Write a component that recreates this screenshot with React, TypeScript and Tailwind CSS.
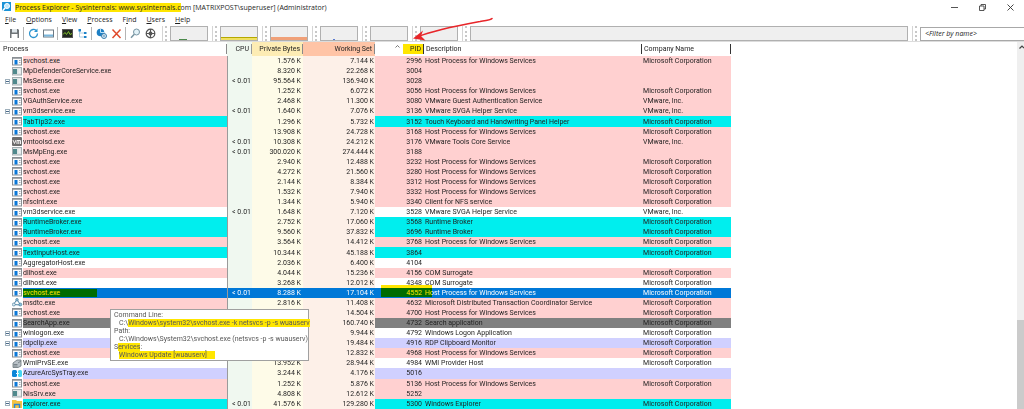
import React, { useState } from 'react'

type Tone = 'service' | 'plain' | 'immersive' | 'own' | 'suspended' | 'selected'
type IconKind = 'app' | 'console' | 'vm' | 'msdtc' | 'wmi' | 'azure' | 'explorer'

interface ProcessRow {
  name: string
  cpu?: string
  priv: string
  ws: string
  pid: number
  description?: string
  company?: string
  tone: Tone
  icon?: IconKind
  parent?: boolean
}

const MS = 'Microsoft Corporation'
const HOST = 'Host Process for Windows Services'

const processes: ProcessRow[] = [
  { name: 'svchost.exe', priv: '1.576 K', ws: '7.144 K', pid: 2996, description: HOST, company: MS, tone: 'service' },
  { name: 'MpDefenderCoreService.exe', priv: '8.320 K', ws: '22.268 K', pid: 3004, tone: 'service', icon: 'console' },
  { name: 'MsSense.exe', cpu: '< 0.01', priv: '95.564 K', ws: '136.940 K', pid: 3028, tone: 'service', icon: 'console', parent: true },
  { name: 'svchost.exe', priv: '1.252 K', ws: '6.072 K', pid: 3056, description: HOST, company: MS, tone: 'service' },
  { name: 'VGAuthService.exe', priv: '2.468 K', ws: '11.300 K', pid: 3080, description: 'VMware Guest Authentication Service', company: 'VMware, Inc.', tone: 'service' },
  { name: 'vm3dservice.exe', cpu: '< 0.01', priv: '1.640 K', ws: '7.076 K', pid: 3136, description: 'VMware SVGA Helper Service', company: 'VMware, Inc.', tone: 'service', parent: true },
  { name: 'TabTip32.exe', priv: '1.296 K', ws: '5.732 K', pid: 3152, description: 'Touch Keyboard and Handwriting Panel Helper', company: MS, tone: 'immersive' },
  { name: 'svchost.exe', priv: '13.908 K', ws: '24.728 K', pid: 3168, description: HOST, company: MS, tone: 'service' },
  { name: 'vmtoolsd.exe', cpu: '< 0.01', priv: '10.308 K', ws: '24.212 K', pid: 3176, description: 'VMware Tools Core Service', company: 'VMware, Inc.', tone: 'service', icon: 'vm' },
  { name: 'MsMpEng.exe', cpu: '< 0.01', priv: '300.020 K', ws: '274.444 K', pid: 3188, tone: 'service', icon: 'console' },
  { name: 'svchost.exe', priv: '2.940 K', ws: '12.488 K', pid: 3232, description: HOST, company: MS, tone: 'service' },
  { name: 'svchost.exe', priv: '4.272 K', ws: '21.560 K', pid: 3280, description: HOST, company: MS, tone: 'service' },
  { name: 'svchost.exe', priv: '2.144 K', ws: '8.384 K', pid: 3312, description: HOST, company: MS, tone: 'service' },
  { name: 'svchost.exe', priv: '1.532 K', ws: '7.940 K', pid: 3332, description: HOST, company: MS, tone: 'service' },
  { name: 'nfsclnt.exe', priv: '1.344 K', ws: '5.940 K', pid: 3340, description: 'Client for NFS service', company: MS, tone: 'service' },
  { name: 'vm3dservice.exe', cpu: '< 0.01', priv: '1.648 K', ws: '7.120 K', pid: 3528, description: 'VMware SVGA Helper Service', company: 'VMware, Inc.', tone: 'plain' },
  { name: 'RuntimeBroker.exe', priv: '2.752 K', ws: '17.060 K', pid: 3568, description: 'Runtime Broker', company: MS, tone: 'immersive' },
  { name: 'RuntimeBroker.exe', priv: '9.560 K', ws: '37.832 K', pid: 3696, description: 'Runtime Broker', company: MS, tone: 'immersive' },
  { name: 'svchost.exe', priv: '3.564 K', ws: '14.412 K', pid: 3768, description: HOST, company: MS, tone: 'service' },
  { name: 'TextInputHost.exe', priv: '10.344 K', ws: '45.188 K', pid: 3864, company: MS, tone: 'immersive' },
  { name: 'AggregatorHost.exe', priv: '2.036 K', ws: '6.400 K', pid: 4104, tone: 'plain' },
  { name: 'dllhost.exe', priv: '4.044 K', ws: '15.236 K', pid: 4156, description: 'COM Surrogate', company: MS, tone: 'service' },
  { name: 'dllhost.exe', priv: '3.268 K', ws: '12.012 K', pid: 4348, description: 'COM Surrogate', company: MS, tone: 'plain' },
  { name: 'svchost.exe', cpu: '< 0.01', priv: '8.288 K', ws: '17.104 K', pid: 4552, description: HOST, company: MS, tone: 'selected' },
  { name: 'msdtc.exe', priv: '2.816 K', ws: '11.408 K', pid: 4632, description: 'Microsoft Distributed Transaction Coordinator Service', company: MS, tone: 'service', icon: 'msdtc' },
  { name: 'svchost.exe', priv: '', ws: '14.504 K', pid: 4700, description: HOST, company: MS, tone: 'service' },
  { name: 'SearchApp.exe', priv: '', ws: '160.740 K', pid: 4732, description: 'Search application', company: MS, tone: 'suspended' },
  { name: 'winlogon.exe', priv: '', ws: '9.944 K', pid: 4792, description: 'Windows Logon Application', company: MS, tone: 'plain', parent: true },
  { name: 'rdpclip.exe', priv: '', ws: '19.484 K', pid: 4916, description: 'RDP Clipboard Monitor', company: MS, tone: 'own', parent: true },
  { name: 'svchost.exe', priv: '', ws: '12.832 K', pid: 4968, description: HOST, company: MS, tone: 'service' },
  { name: 'WmiPrvSE.exe', priv: '13.952 K', ws: '28.944 K', pid: 4984, description: 'WMI Provider Host', company: MS, tone: 'plain', icon: 'wmi' },
  { name: 'AzureArcSysTray.exe', priv: '3.244 K', ws: '4.176 K', pid: 5016, tone: 'own', icon: 'azure' },
  { name: 'svchost.exe', priv: '1.252 K', ws: '5.876 K', pid: 5136, description: HOST, company: MS, tone: 'service' },
  { name: 'NisSrv.exe', priv: '4.808 K', ws: '12.612 K', pid: 5252, tone: 'service', icon: 'console' },
  { name: 'explorer.exe', cpu: '< 0.01', priv: '41.576 K', ws: '129.280 K', pid: 5300, description: 'Windows Explorer', company: MS, tone: 'immersive', icon: 'explorer', parent: true }
]

const toneClass: Record<Tone, string> = {
  service: 'bg-[#ffd0d0]',
  plain: 'bg-white',
  immersive: 'bg-[#00eeee]',
  own: 'bg-[#d0d0ff]',
  suspended: 'bg-[#808080]',
  selected: 'bg-[#0078d7] text-white'
}

const ProcessIcon = ({ kind = 'app' }: { kind?: IconKind }) => (
  <svg width="11" height="9" viewBox="0 0 11 9" className="block shrink-0" aria-hidden="true">
    {kind === 'app' && (
      <>
        <rect x="0.5" y="0.5" width="9" height="7.5" fill="#fafafa" stroke="#8a8f94" />
        <path d="M0 1h10" stroke="#8a8f94" strokeWidth="1.5" />
        <rect x="2.5" y="3" width="3" height="4.5" fill="#0a78d8" />
        <path d="M7 3.5h1.5M7 5.5h1.5" stroke="#a0a8b0" />
      </>
    )}
    {kind === 'console' && (
      <>
        <rect x="0.5" y="0.5" width="9" height="7.5" fill="#dfe5e6" stroke="#a3adb1" />
        <rect x="1" y="2" width="4" height="5" fill="#4f898c" />
        <path d="M6.5 3h2M6.5 5h2" stroke="#ffffff" />
      </>
    )}
    {kind === 'vm' && (
      <>
        <rect width="10" height="9" rx="1" fill="#6d6d6d" />
        <path d="M1 3l1.5 3.5L4 3M5 7V3.5h3.5V7M6.8 3.5V7" fill="none" stroke="#fff" strokeWidth="0.9" />
      </>
    )}
    {kind === 'msdtc' && (
      <>
        <path d="M5 1.5L1.5 6.5L8.5 7L5 1.5" fill="none" stroke="#4f87a8" />
        <circle cx="5" cy="1.8" r="1.3" fill="#8cc2dc" stroke="#3d6f90" strokeWidth="0.6" />
        <circle cx="1.8" cy="6.5" r="1.5" fill="#d8ecf5" stroke="#3d6f90" strokeWidth="0.6" />
        <circle cx="8.3" cy="6.5" r="1.5" fill="#8cc2dc" stroke="#3d6f90" strokeWidth="0.6" />
      </>
    )}
    {kind === 'wmi' && (
      <>
        <path d="M1 4l4-3h4v6l-3 1.5H1z" fill="#b9c1c7" stroke="#68737a" strokeWidth="0.8" />
        <path d="M1.5 5.5h4M1.5 7h4M6 4l3-2" stroke="#68737a" strokeWidth="0.8" />
      </>
    )}
    {kind === 'azure' && (
      <>
        <rect y="1" width="5" height="7" rx="1.5" fill="#0a86d8" />
        <rect x="6" y="1" width="4" height="7" rx="1.5" fill="#45d5f2" />
        <path d="M4 4.5h3" stroke="#e8fbff" />
      </>
    )}
    {kind === 'explorer' && (
      <>
        <path d="M0 1h4l1 1h5v7H0z" fill="#f5c342" />
        <path d="M2.5 9V5.5h5V9" fill="none" stroke="#2d86d2" strokeWidth="1.5" />
      </>
    )}
  </svg>
)

const Marker = ({ children, className = '' }: { children: React.ReactNode; className?: string }) => (
  <mark className={`bg-[#ffe600] text-inherit ${className}`}>{children}</mark>
)

const menus = [
  { pre: '', key: 'F', post: 'ile' },
  { pre: '', key: 'O', post: 'ptions' },
  { pre: '', key: 'V', post: 'iew' },
  { pre: '', key: 'P', post: 'rocess' },
  { pre: 'F', key: 'i', post: 'nd' },
  { pre: '', key: 'U', post: 'sers' },
  { pre: '', key: 'H', post: 'elp' }
]

const ToolButton = ({ label, children }: { label: string; children: React.ReactNode }) => (
  <button type="button" aria-label={label} className="flex w-[15px] items-center justify-center hover:bg-[#e5f3ff]">
    <svg width="11" height="11" viewBox="0 0 11 11" fill="none">
      {children}
    </svg>
  </button>
)

const Separator = () => <div className="my-px ml-px mr-[2px] w-px bg-[#b4b4b4]" />

const Grip = () => (
  <div className="flex w-3 shrink-0 justify-center gap-[2px]">
    <div className="w-px bg-[#d4d4d4]" />
    <div className="border-l-2 border-dotted border-[#c8c8c8]" />
  </div>
)

const Graph = ({ children }: { children?: React.ReactNode }) => (
  <div className="flex w-[38px] shrink-0 flex-col justify-end border border-[#b0b0b0] bg-[#efefef]">{children}</div>
)

const Toolbar = () => {
  const [filter, setFilter] = useState('')

  return (
    <div className="relative flex h-4 shrink-0 border-b border-[#dcdcdc]">
      <div className="flex pl-[7px]">
        <ToolButton label="Save">
          <path d="M1 1h8l1 1v8H1z" fill="#6f7478" />
          <rect x="3" y="1" width="5" height="3.5" fill="#dfe6ea" />
          <rect x="2.5" y="6" width="6" height="4" fill="#fff" />
        </ToolButton>
        <Separator />
        <ToolButton label="Refresh Now">
          <path d="M9.5 5.5a4 4 0 1 1-1.2-2.9" stroke="#2b93cf" strokeWidth="1.3" />
          <path d="M9.5 0.5v3.5H6z" fill="#2b93cf" />
        </ToolButton>
        <ToolButton label="Show Lower Pane">
          <rect x="0.5" y="2" width="10" height="7" fill="#fff" stroke="#6d7a84" />
          <path d="M1 7.5h9" stroke="#79b6dc" strokeWidth="2" />
        </ToolButton>
        <Separator />
        <ToolButton label="System Information">
          <rect x="0.5" y="1.5" width="10" height="8" fill="#20281e" stroke="#555" />
          <path d="M1 6.5l2-2 1.5 2 2-3 1.5 3 2-1" stroke="#7fbf2b" />
        </ToolButton>
        <ToolButton label="Show Process Tree">
          <path d="M2.5 2v7h5M2.5 5h5" stroke="#9bbfd8" strokeWidth="0.8" />
          <path d="M1.5 1h2.5v2.5H1.5zM7 4h2.5v2H7zM7 8h2.5v2H7z" fill="#1c83c9" />
        </ToolButton>
        <Separator />
        <ToolButton label="Properties">
          <circle cx="4.5" cy="4.5" r="3.8" fill="#1d7fc4" />
          <path d="M4.5 1v3.5h3.5" stroke="#bfe0f5" />
          <circle cx="8" cy="8" r="2.5" fill="#d9e7f0" stroke="#3a7eae" />
          <circle cx="8" cy="8" r="0.8" fill="#3a7eae" />
        </ToolButton>
        <ToolButton label="Kill Process">
          <path d="M1.5 1.5l8 8.5M9.5 1.5l-8 8.5" stroke="#e04a2b" strokeWidth="1.5" />
        </ToolButton>
        <Separator />
        <ToolButton label="Find Handle or DLL">
          <circle cx="6.5" cy="4" r="3" fill="#e2f2f8" stroke="#7895a3" />
          <path d="M4.3 6.3L1 9.8" stroke="#7895a3" strokeWidth="1.5" />
        </ToolButton>
        <ToolButton label="Find Window's Process">
          <circle cx="5.5" cy="5.5" r="4.3" fill="#fff" stroke="#555" strokeWidth="1.2" />
          <path d="M5.5 1v9M1 5.5h9" stroke="#555" strokeWidth="1.2" />
          <circle cx="5.5" cy="5.5" r="2" fill="#555" />
        </ToolButton>
      </div>
      <Grip />
      <Graph>
        <div className="ml-2 h-px w-2 bg-[#4c8a4c]" />
      </Graph>
      <Grip />
      <Graph>
        <div className="h-[3px] border-t border-[#b5a800] bg-[#f0e060]" />
      </Graph>
      <Grip />
      <Graph>
        <div className="h-[3px] bg-[#f0a078]" />
      </Graph>
      <Grip />
      <Graph>
        <div className="ml-3 h-px w-[2px] bg-[#5a7ad0]" />
      </Graph>
      <Grip />
      <Graph />
      <Grip />
      <Graph />
      <Grip />
      <div className="flex-1 border border-[#b0b0b0] bg-[#efefef]" />
      <Grip />
      <input
        type="text"
        aria-label="Filter by name"
        placeholder="<Filter by name>"
        value={filter}
        onChange={(e) => setFilter(e.target.value)}
        className="mt-px w-[104px] border border-r-0 border-[#a8a8a8] bg-white px-1 font-['Open_Sans',sans-serif] text-[7px] italic outline-none placeholder:text-[#222]"
      />

      {/* Red arrow pointing at the PID column */}
      <svg width="84" height="26" viewBox="0 0 84 26" fill="none" className="pointer-events-none absolute -top-[10px] left-[411px] z-20">
        <path d="M81 2.5c-2 2-5 1.5-12 3C50 9 25 13.5 6 21" stroke="#e8262a" strokeWidth="1.6" strokeLinecap="round" />
        <path d="M2 22.5l10-8-2 5.5 4.5 4.5z" fill="#e8262a" />
      </svg>
    </div>
  )
}

const CommandTooltip = () => (
  <div
    role="tooltip"
    className="absolute left-[87px] top-[21px] z-10 w-[199px] whitespace-nowrap border border-[#a0a0a0] bg-white px-[3px] py-px text-[7px] leading-[8px] text-[#575757]"
  >
    <div>Command Line:</div>
    <div className="pl-[5px]">
      C:\<Marker>Windows\system32\svchost.exe -k netsvcs -p -s wuauserv</Marker>
    </div>
    <div>Path:</div>
    <div className="pl-[5px]">C:\Windows\System32\svchost.exe (netsvcs -p -s wuauserv)</div>
    <div>
      S<Marker>ervices</Marker>:
    </div>
    <div className="pl-[5px]">
      <Marker className="pr-2">Windows Update [wuauserv]</Marker>
    </div>
  </div>
)

const ProcessTable = () => (
  <table className="h-full w-full table-fixed border-collapse whitespace-nowrap text-[7px] leading-[10px] text-[#1e1e1e]">
    <colgroup>
      <col className="w-[23px]" />
      <col className="w-[204px]" />
      <col className="w-[25px]" />
      <col className="w-[51px]" />
      <col className="w-[72px]" />
      <col className="w-[49px]" />
      <col className="w-[218px]" />
      <col className="w-[89px]" />
      <col />
    </colgroup>
    <thead>
      <tr className="h-[14px] text-left *:p-0 *:font-normal">
        <th colSpan={2}>
          <div className="border-r border-[#8a8a8a] pl-[3px]">Process</div>
        </th>
        <th className="bg-[#f0f8f0] text-right">
          <div className="border-r border-[#9a9a9a] pr-[2px]">CPU</div>
        </th>
        <th className="bg-[#fdecb4] text-right">
          <div className="border-r border-[#8a8a8a] pr-[2px]">Private Bytes</div>
        </th>
        <th className="bg-[#ffc4a6] text-right">
          <div className="border-r border-[#8a8a8a] pr-[2px]">Working Set</div>
        </th>
        <th aria-sort="ascending">
          <div className="flex items-center justify-end border-r border-[#333]">
            <svg width="5" height="3" viewBox="0 0 5 3" className="mb-[6px] mr-[3px]" aria-hidden="true">
              <path d="M0.5 2.5l2-2 2 2" fill="none" stroke="#555" strokeWidth="0.8" />
            </svg>
            <Marker className="pl-[7px] pr-[2px]">PID</Marker>
          </div>
        </th>
        <th>
          <div className="border-r border-[#333] pl-[2px]">Description</div>
        </th>
        <th>
          <div className="border-r border-[#333] pl-[2px]">Company Name</div>
        </th>
        <th aria-label="Empty" />
      </tr>
    </thead>
    <tbody>
      {processes.map((p) => {
        const selected = p.tone === 'selected'
        const tone = toneClass[p.tone]
        return (
          <tr key={p.pid} aria-selected={selected} className="*:p-0">
            <td>
              <div className="flex h-[10px] items-center justify-end gap-[2px]">
                {p.parent && (
                  <button type="button" aria-label={`Collapse ${p.name}`} className="flex size-[5px] items-center border border-[#9fb0bc] bg-white">
                    <span className="h-px w-full bg-[#4a6a8a]" />
                  </button>
                )}
                <ProcessIcon kind={p.icon} />
              </div>
            </td>
            <td className={`relative border-r border-[#9a9a9a] ${tone}`}>
              {p.name}
              {selected && (
                <>
                  <div className="absolute inset-y-px left-0 w-[74px] bg-[#ffe600] mix-blend-multiply" />
                  <CommandTooltip />
                </>
              )}
            </td>
            <td className={`text-right ${selected ? tone : 'bg-[#f0f8f0]'}`}>
              <span className="pr-px">{p.cpu}</span>
            </td>
            <td className={`text-right ${selected ? tone : 'bg-[#fefbe8]'}`}>
              <span className="pr-[2px]">{p.priv}</span>
            </td>
            <td className={`text-right ${selected ? tone : 'bg-[#fdf0e8]'}`}>
              <span className="pr-px">{p.ws}</span>
            </td>
            <td className={`relative text-right ${tone}`}>
              <span className="pr-[2px]">{p.pid}</span>
              {selected && <div className="absolute -top-[3px] left-[6px] z-10 h-3 w-[51px] bg-[#ffe600] mix-blend-multiply" />}
            </td>
            <td className={`pl-px ${tone}`}>
              <span className="pl-px">{p.description}</span>
            </td>
            <td className={tone}>
              <span className="pl-px">{p.company}</span>
            </td>
            <td />
          </tr>
        )
      })}
    </tbody>
  </table>
)

const App: React.FC = () => {
  return (
    <div className="flex h-screen flex-col overflow-hidden bg-white font-[Roboto,'Liberation_Sans',sans-serif] text-[#1e1e1e]">
      {/* Title bar */}
      <header className="flex h-[14px] shrink-0 items-center pl-[2px] font-['Open_Sans',sans-serif] text-[7px] leading-[9px]">
        <svg width="10" height="10" viewBox="0 0 10 10" className="mr-[3px]" aria-hidden="true">
          <rect width="9" height="9" fill="#1b93d6" />
          <circle cx="5" cy="4" r="2.5" fill="#bfe6fa" stroke="#fff" />
          <path d="M3 6L0.5 9" stroke="#fff" strokeWidth="1.5" />
        </svg>
        <h1 className="flex-1 whitespace-nowrap">
          <Marker>Process Explorer - Sysinternals: www.sysinternals.c</Marker>om [MATRIXPOST\superuser] (Administrator)
        </h1>
        <div className="flex *:flex *:h-3 *:w-7 *:items-center *:justify-center">
          <button type="button" aria-label="Minimize">
            <svg width="7" height="7" viewBox="0 0 7 7">
              <path d="M0 3.5h7" stroke="#555" />
            </svg>
          </button>
          <button type="button" aria-label="Restore">
            <svg width="7" height="7" viewBox="0 0 7 7" fill="none">
              <path d="M0.5 2h4.5v4.5H0.5zM2 2V0.5h4.5V5H5" stroke="#444" strokeWidth="0.9" />
            </svg>
          </button>
          <button type="button" aria-label="Close">
            <svg width="7" height="7" viewBox="0 0 7 7">
              <path d="M0.5 0.5l6 6M6.5 0.5l-6 6" stroke="#333" strokeWidth="0.9" />
            </svg>
          </button>
        </div>
      </header>

      {/* Menu */}
      <nav className="flex h-3 shrink-0 items-center gap-[10px] pl-[5px] font-['Open_Sans',sans-serif] text-[7px] leading-[10px]">
        {menus.map((m) => (
          <button key={m.key} type="button">
            {m.pre}
            <u>{m.key}</u>
            {m.post}
          </button>
        ))}
      </nav>

      <Toolbar />

      <main className="flex min-h-0 flex-1">
        <div className="isolate min-w-0 flex-1">
          <ProcessTable />
        </div>

        {/* Scrollbar */}
        <div className="flex w-[7px] shrink-0 flex-col bg-[#efefef]">
          <svg width="7" height="11" viewBox="0 0 7 11" fill="none">
            <path d="M2.5 6.5l2.5-2.5 2 2" stroke="#444" strokeWidth="1.2" />
          </svg>
          <div className="flex-[3]" />
          <div className="flex-1 bg-[#cbcbcb]" />
        </div>
      </main>
    </div>
  )
}

export default App
